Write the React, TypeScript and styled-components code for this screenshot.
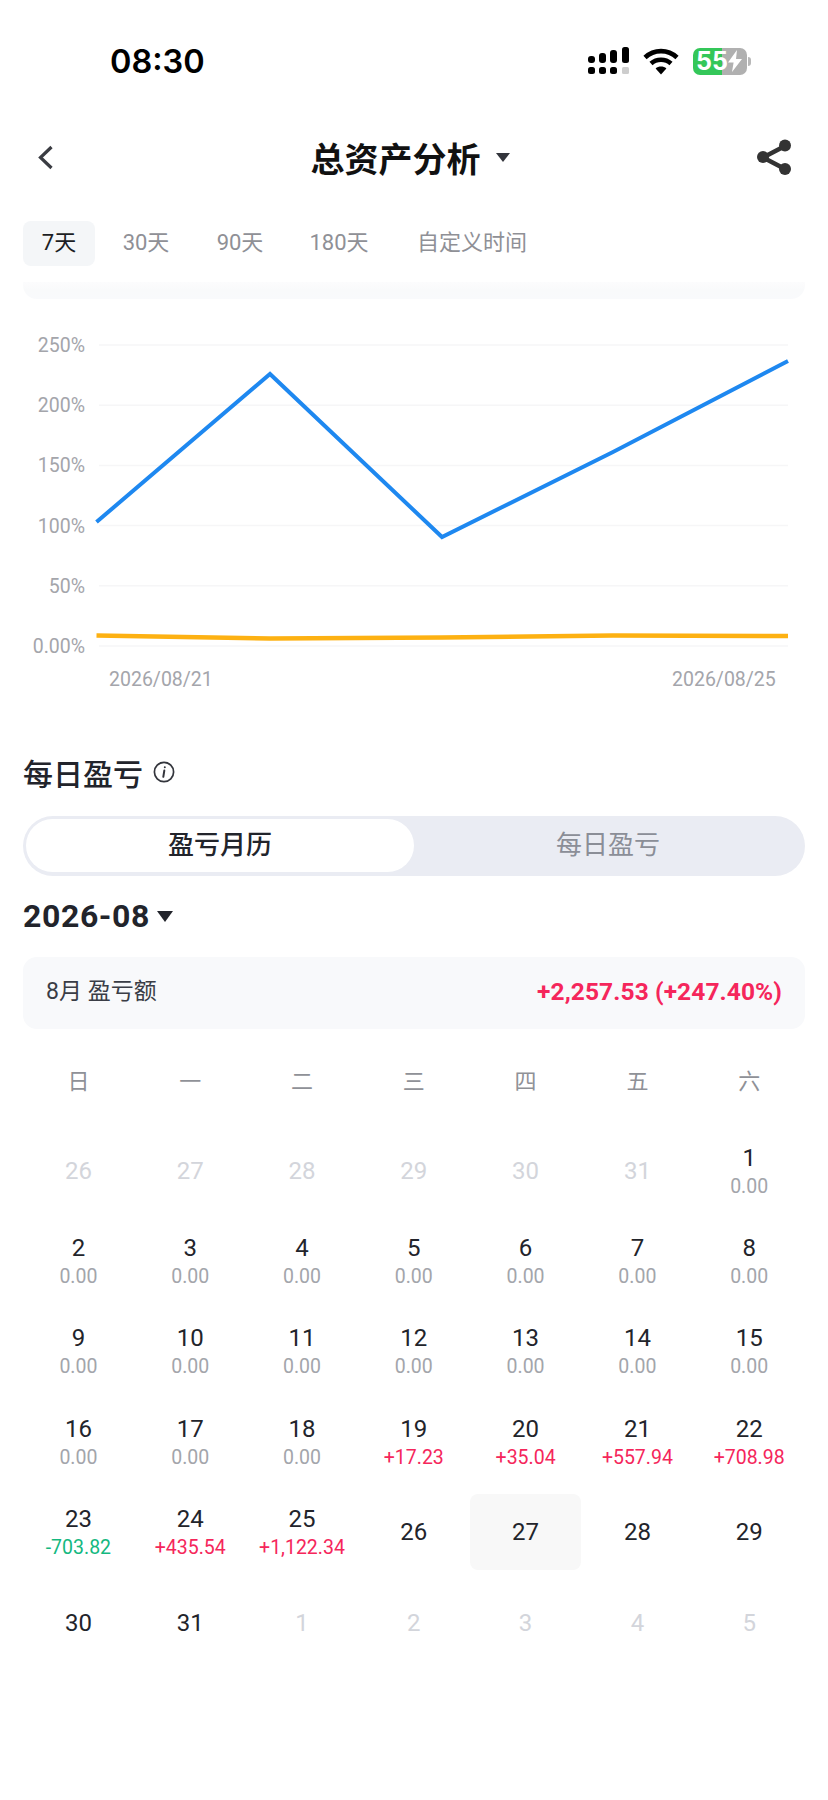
import React from "react";
import styled, { createGlobalStyle } from "styled-components";

const Global = createGlobalStyle`
  html, body { margin: 0; padding: 0; background: #fff; }
  body { font-family: Roboto, "Noto Sans CJK SC", sans-serif; }
  * { box-sizing: border-box; }
`;

const Page = styled.div`
  width: 828px;
  height: 1800px;
  background: #fff;
  display: flex;
  flex-direction: column;
  overflow: hidden;
`;

const StatusBar = styled.div`
  height: 122px;
  padding: 0 81px 0 110px;
  display: flex;
  align-items: center;
  justify-content: space-between;
`;

const Time = styled.div`
  font-family: Inter, sans-serif;
  font-weight: 600;
  font-size: 32.5px;
  color: #000;
`;

const StatusIcons = styled.div`
  display: flex;
  align-items: center;
  gap: 14px;
`;

const Battery = styled.div`
  width: 54px;
  height: 27px;
  border-radius: 7px;
  background: linear-gradient(90deg, #34c759 0 54%, #b0b0b0 54% 100%);
  color: #fff;
  font-family: Inter, sans-serif;
  font-weight: 700;
  font-size: 25px;
  line-height: 27px;
  padding-left: 3px;
  display: flex;
  align-items: center;
  position: relative;
  &::after {
    content: "";
    position: absolute;
    right: -4px;
    top: 9px;
    width: 3px;
    height: 9px;
    border-radius: 0 3px 3px 0;
    background: #b8b8b8;
  }
`;

const NavBar = styled.div`
  height: 70px;
  padding: 0 36px 0 37px;
  display: flex;
  align-items: center;
  justify-content: space-between;
`;

const NavTitle = styled.div`
  display: flex;
  align-items: center;
  gap: 15px;
  margin-left: 10px;
  font-size: 34px;
  font-weight: 700;
  color: #111;
`;

const Caret = styled.span<{ $w: number; $h: number; $c: string }>`
  width: 0;
  height: 0;
  border-left: ${(p) => p.$w / 2}px solid transparent;
  border-right: ${(p) => p.$w / 2}px solid transparent;
  border-top: ${(p) => p.$h}px solid ${(p) => p.$c};
`;

const Tabs = styled.div`
  margin-top: 29px;
  padding-left: 23px;
  display: flex;
  height: 45px;
`;

const Tab = styled.div<{ $active?: boolean; $w: number }>`
  width: ${(p) => p.$w}px;
  height: 45px;
  border-radius: 8px;
  background: ${(p) => (p.$active ? "#f4f6f8" : "transparent")};
  color: ${(p) => (p.$active ? "#1c1e24" : "#8f9096")};
  font-size: 22px;
  line-height: 43px;
  text-align: center;
  flex: none;
`;

const Strip = styled.div`
  margin: 16px 23px 0 23px;
  height: 17px;
  border-radius: 0 0 14px 14px;
  background: linear-gradient(180deg, #fcfcfd 0%, #f9fafb 50%, #f9fafc 100%);
`;

const ChartWrap = styled.div`
  height: 448px;
  display: block;
  svg { display: block; }
`;

const AxisText = styled.text`
  font-family: Roboto, sans-serif;
  font-size: 19.5px;
  fill: #a4a5ab;
`;

const SectionHead = styled.div`
  height: 50px;
  padding-left: 23px;
  display: flex;
  align-items: center;
  gap: 10px;
`;

const SectionTitle = styled.div`
  font-size: 30px;
  font-weight: 500;
  color: #22242b;
`;

const Segment = styled.div`
  margin: 19px 23px 0 23px;
  height: 60px;
  border-radius: 30px;
  background: #eaecf3;
  padding: 3px 0 4px 3px;
  display: flex;
`;

const SegItem = styled.div<{ $active?: boolean }>`
  border-radius: 27px;
  font-size: 26px;
  font-weight: ${(p) => (p.$active ? 500 : 400)};
  line-height: 52px;
  text-align: center;
  color: ${(p) => (p.$active ? "#22242b" : "#8b8e97")};
  background: ${(p) => (p.$active ? "#fff" : "transparent")};
  width: 388px;
`;

const MonthRow = styled.div`
  margin-top: 20px;
  height: 40px;
  padding-left: 23px;
  display: flex;
  align-items: center;
  gap: 7px;
  font-size: 32px;
  font-weight: 700;
  color: #22242b;
  letter-spacing: 0.6px;
`;

const Summary = styled.div`
  margin: 21px 23px 0 23px;
  height: 72px;
  border-radius: 14px;
  background: #f8f9fb;
  padding: 0 23px;
  display: flex;
  align-items: center;
  justify-content: space-between;
`;

const SummaryLabel = styled.div`
  font-size: 23px;
  line-height: 28px;
  margin-top: -2px;
  color: #3a3d46;
`;

const SummaryValue = styled.div`
  font-size: 24.5px;
  line-height: 28px;
  margin-top: -2px;
  font-weight: 700;
  color: #f5265b;
  letter-spacing: 0.1px;
`;

const Calendar = styled.div`
  margin: 22px 0 0 22.5px;
  width: 784px;
  display: grid;
  grid-template-columns: repeat(7, 111.8px);
`;

const Weekday = styled.div`
  height: 55px;
  padding-top: 6px;
  display: flex;
  align-items: center;
  justify-content: center;
  font-size: 22px;
  line-height: 26px;
  color: #8f9197;
  margin-bottom: 20px;
`;

const Cell = styled.div<{ $selected?: boolean }>`
  height: 90.3px;
  display: flex;
  flex-direction: column;
  align-items: center;
  justify-content: center;
  position: relative;
  &::before {
    content: "";
    display: ${(p) => (p.$selected ? "block" : "none")};
    position: absolute;
    inset: 7px 0;
    border-radius: 8px;
    background: #f8f8f8;
  }
`;

const DayNum = styled.div<{ $muted?: boolean }>`
  position: relative;
  font-size: 24px;
  line-height: 30px;
  color: ${(p) => (p.$muted ? "#d3d5db" : "#22242b")};
`;

const DayVal = styled.div<{ $tone: "zero" | "up" | "down" }>`
  font-size: 19.5px;
  line-height: 26px;
  margin-top: 1px;
  color: ${(p) =>
    p.$tone === "up" ? "#f5265b" : p.$tone === "down" ? "#14b87f" : "#a3a5ab"};
`;

const InfoIcon = () => (
  <svg width="22" height="22" viewBox="0 0 22 22" fill="none">
    <circle cx="11" cy="11" r="9.6" stroke="#33353c" strokeWidth="1.7" />
    <path d="M11.8 6.2v.1M11.3 9.6l-1 6.2" stroke="#33353c" strokeWidth="2" strokeLinecap="round" />
  </svg>
);

const Signal = () => (
  <svg width="41" height="28" viewBox="0 0 41 28">
    <rect x="0" y="9" width="7" height="7" rx="3" fill="#000" />
    <rect x="11" y="6" width="7" height="10" rx="3" fill="#000" />
    <rect x="22" y="3" width="7" height="13" rx="3" fill="#000" />
    <rect x="34" y="0" width="7" height="16" rx="2.5" fill="#000" />
    <rect x="0" y="20" width="7" height="7" rx="2.5" fill="#000" />
    <rect x="11" y="20" width="7" height="7" rx="2.5" fill="#000" />
    <rect x="22" y="20" width="7" height="7" rx="2.5" fill="#000" />
    <rect x="34" y="20" width="7" height="7" rx="1.5" fill="#cdcdcd" />
  </svg>
);

const Wifi = () => (
  <svg width="36" height="27" viewBox="0 0 36 27" fill="none">
    <path d="M2 9.5C11 1 25 1 34 9.5" stroke="#000" strokeWidth="4.6" strokeLinecap="butt" />
    <path d="M8 15.5c5.6-5 14.4-5 20 0" stroke="#000" strokeWidth="4.6" />
    <path d="M12.6 20.5c3-2.6 7.8-2.6 10.8 0L18 26.5z" fill="#000" />
  </svg>
);

const Bolt = () => (
  <svg width="14" height="22" viewBox="0 0 14 22">
    <path d="M9 0L0 12.5h5.6L4 22l10-13H8z" fill="#fff" />
  </svg>
);

const Back = () => (
  <svg width="17" height="25" viewBox="0 0 17 25" fill="none">
    <path d="M14.5 2L3.5 12.5 14.5 23" stroke="#3a3c42" strokeWidth="3.2" />
  </svg>
);

const Share = () => (
  <svg width="36" height="36" viewBox="0 0 36 36">
    <path d="M29 7L7 18.5 29 30" fill="none" stroke="#333" strokeWidth="4.6" />
    <circle cx="29" cy="6.5" r="6" fill="#333" />
    <circle cx="7" cy="18" r="6" fill="#333" />
    <circle cx="29" cy="30" r="6" fill="#333" />
  </svg>
);

const yLabels = ["250%", "200%", "150%", "100%", "50%", "0.00%"];

const Chart = () => (
  <svg width="828" height="448" viewBox="0 299 828 448">
    {yLabels.map((l, i) => {
      const y = 345 + i * 60.2;
      return (
        <g key={l}>
          <line x1="99" x2="788" y1={y} y2={y} stroke="#f6f6f7" strokeWidth="1.5" />
          <AxisText x="85" y={y + 7} textAnchor="end">{l}</AxisText>
        </g>
      );
    })}
    <polyline
      points="96.5,522 270,374 442,537 613,452 788,361"
      fill="none"
      stroke="#1e88f0"
      strokeWidth="4"
    />
    <polyline
      points="96.5,635.5 270,638.5 442,637.5 613,635.5 788,636"
      fill="none"
      stroke="#fdb112"
      strokeWidth="4.4"
    />
    <AxisText x="109" y="686">2026/08/21</AxisText>
    <AxisText x="672" y="686">2026/08/25</AxisText>
  </svg>
);

type Day = { d: number; v?: string; tone?: "zero" | "up" | "down"; muted?: boolean; sel?: boolean };

const days: Day[] = [
  ...[26, 27, 28, 29, 30, 31].map((d) => ({ d, muted: true })),
  ...Array.from({ length: 18 }, (_, i) => ({ d: i + 1, v: "0.00", tone: "zero" as const })),
  { d: 19, v: "+17.23", tone: "up" },
  { d: 20, v: "+35.04", tone: "up" },
  { d: 21, v: "+557.94", tone: "up" },
  { d: 22, v: "+708.98", tone: "up" },
  { d: 23, v: "-703.82", tone: "down" },
  { d: 24, v: "+435.54", tone: "up" },
  { d: 25, v: "+1,122.34", tone: "up" },
  { d: 26 },
  { d: 27, sel: true },
  { d: 28 },
  { d: 29 },
  { d: 30 },
  { d: 31 },
  ...[1, 2, 3, 4, 5].map((d) => ({ d, muted: true })),
];

export default function App() {
  return (
    <Page>
      <Global />
      <StatusBar>
        <Time>08:30</Time>
        <StatusIcons>
          <Signal />
          <Wifi />
          <Battery>
            55
            <Bolt />
          </Battery>
        </StatusIcons>
      </StatusBar>
      <NavBar>
        <Back />
        <NavTitle>
          总资产分析
          <Caret $w={14} $h={9} $c="#33353c" />
        </NavTitle>
        <Share />
      </NavBar>
      <Tabs>
        <Tab $active $w={72}>7天</Tab>
        <Tab $w={102}>30天</Tab>
        <Tab $w={86}>90天</Tab>
        <Tab $w={112}>180天</Tab>
        <Tab $w={154}>自定义时间</Tab>
      </Tabs>
      <Strip />
      <ChartWrap>
        <Chart />
      </ChartWrap>
      <SectionHead>
        <SectionTitle>每日盈亏</SectionTitle>
        <InfoIcon />
      </SectionHead>
      <Segment>
        <SegItem $active>盈亏月历</SegItem>
        <SegItem>每日盈亏</SegItem>
      </Segment>
      <MonthRow>
        2026-08
        <Caret $w={16} $h={11} $c="#22242b" />
      </MonthRow>
      <Summary>
        <SummaryLabel>8月 盈亏额</SummaryLabel>
        <SummaryValue>+2,257.53 (+247.40%)</SummaryValue>
      </Summary>
      <Calendar>
        {["日", "一", "二", "三", "四", "五", "六"].map((w) => (
          <Weekday key={w}>{w}</Weekday>
        ))}
        {days.map((c, i) => (
          <Cell key={i} $selected={c.sel}>
            <DayNum $muted={c.muted}>{c.d}</DayNum>
            {c.v && <DayVal $tone={c.tone ?? "zero"}>{c.v}</DayVal>}
          </Cell>
        ))}
      </Calendar>
    </Page>
  );
}
